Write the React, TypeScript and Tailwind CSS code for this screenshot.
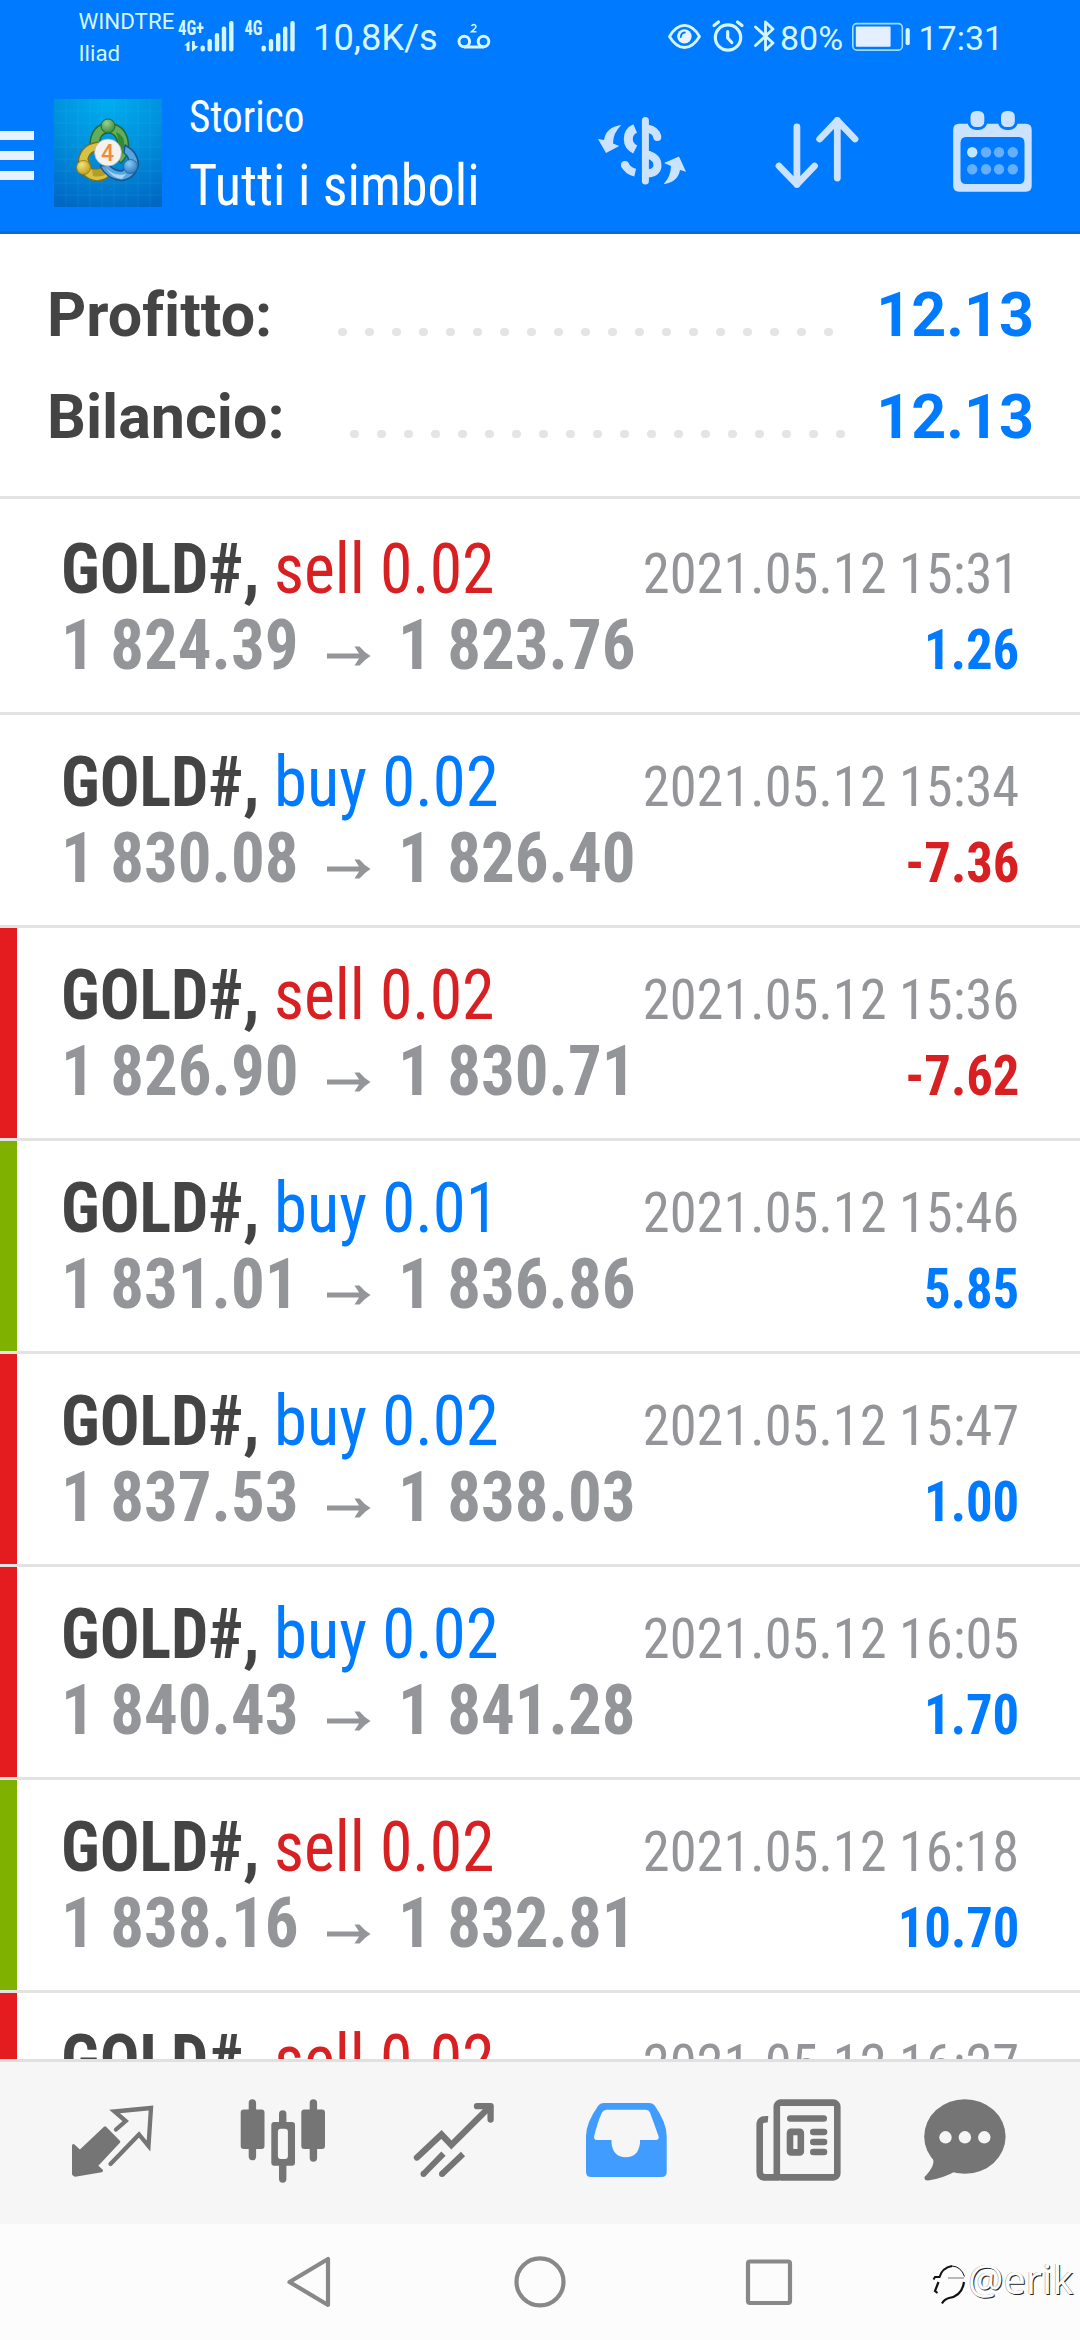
import type { ReactNode } from "react";

type Stripe = "none" | "red" | "green";
type Deal = {
  side: "sell" | "buy";
  volume: string;
  open: string;
  close: string;
  time: string;
  profit: string;
  stripe: Stripe;
};

const deals: Deal[] = [
  { side: "sell", volume: "0.02", open: "1 824.39", close: "1 823.76", time: "2021.05.12 15:31", profit: "1.26", stripe: "none" },
  { side: "buy", volume: "0.02", open: "1 830.08", close: "1 826.40", time: "2021.05.12 15:34", profit: "-7.36", stripe: "none" },
  { side: "sell", volume: "0.02", open: "1 826.90", close: "1 830.71", time: "2021.05.12 15:36", profit: "-7.62", stripe: "red" },
  { side: "buy", volume: "0.01", open: "1 831.01", close: "1 836.86", time: "2021.05.12 15:46", profit: "5.85", stripe: "green" },
  { side: "buy", volume: "0.02", open: "1 837.53", close: "1 838.03", time: "2021.05.12 15:47", profit: "1.00", stripe: "red" },
  { side: "buy", volume: "0.02", open: "1 840.43", close: "1 841.28", time: "2021.05.12 16:05", profit: "1.70", stripe: "red" },
  { side: "sell", volume: "0.02", open: "1 838.16", close: "1 832.81", time: "2021.05.12 16:18", profit: "10.70", stripe: "green" },
];

const stripeClass: Record<Stripe, string> = {
  none: "bg-white",
  red: "bg-[#e41c20]",
  green: "bg-[#7fb200]",
};

function Signal({ label, viewBox, className, bars, labelX, arrows }: {
  label: string; viewBox: string; className: string; bars: number[]; labelX: number; arrows?: boolean;
}) {
  const tops = [45.5, 39, 33, 26.5, 21];
  return (
    <svg viewBox={viewBox} className={className} fill="#d6f6ff">
      <text x={labelX} y="35" fontSize="19.5" fontWeight="700" fontFamily="Roboto Condensed" textLength={arrows ? 26 : 18} lengthAdjust="spacingAndGlyphs">
        {label}
      </text>
      {bars.map((x, i) => (
        <rect key={x} x={x - 2.2} y={tops[i]} width="4.4" height={51.5 - tops[i]} rx="2" />
      ))}
      {arrows && <path d="M184 45.5L189.5 41V51H186.600V45.500ZM192 41H194.800V45.500L198.500 46.500L192 51.500Z" />}
    </svg>
  );
}

function StatusBar() {
  return (
    <div className="flex h-[75px] items-center font-['Roboto',sans-serif] text-[#d6f6ff]">
      <div className="mb-[2px] ml-[78.5px] w-[98.5px] whitespace-nowrap text-[22.300px] leading-[32px]">
        <div>WINDTRE</div>
        <div>Iliad</div>
      </div>
      <Signal label="4G+" labelX={178} arrows viewBox="177 0 59 75" className="h-[75px] w-[59px]" bars={[202.7, 209.7, 217, 224, 231.300]} />
      <Signal label="4G" labelX={244.500} viewBox="236 0 64 75" className="h-[75px] w-[64px]" bars={[263.7, 271, 278.200, 285.200, 292.5]} />
      <div className="ml-[13px] w-[138px] whitespace-nowrap text-[36.300px] leading-[36px]">10,8K/s</div>
      <svg viewBox="451 0 47 75" className="h-[75px] w-[47px]" fill="none" stroke="#d6f6ff" strokeWidth="3">
        <circle cx="464.300" cy="41.500" r="5.300" />
        <circle cx="483.500" cy="41.500" r="5.300" />
        <path d="M464 47H484" />
        <path d="M471.500 26Q472.500 24.500 474 24.500Q476 24.800 476 26.500Q476 28 471.500 31.700H476.500" strokeWidth="1.5" />
      </svg>
      <svg viewBox="664 0 114 75" className="ml-[166px] h-[75px] w-[114px]" fill="none" stroke="#d6f6ff" strokeWidth="3.2" strokeLinecap="round" strokeLinejoin="round">
        <path d="M669.500 36.500Q676 25.300 684.500 25.300Q693 25.300 699.500 36.500Q693 47.500 684.500 47.500Q676 47.500 669.500 36.500Z" strokeWidth="2.800" />
        <circle cx="684.400" cy="36.400" r="7.200" fill="#e8f4ff" stroke="none" />
        <path d="M680.800 37Q681 32.800 684.800 32.500" stroke="#007aff" strokeWidth="1.800" />
        <circle cx="728" cy="37.500" r="12.700" />
        <path d="M727.700 31.500V38L731.800 42.500" />
        <path d="M714 25.500L718.500 22M742 25.500L737.500 22" />
        <path d="M755.500 27L773 43L765.500 50V22L773 29L755.500 45.500" strokeWidth="2.800" />
      </svg>
      <div className="ml-[2px] w-[72px] whitespace-nowrap text-[34px] leading-[34px]">80%</div>
      <svg viewBox="852 0 60 75" className="h-[75px] w-[60px]">
        <rect x="852.8" y="23.6" width="49.5" height="26.5" rx="4" fill="none" stroke="#9fdcff" strokeWidth="1.600" />
        <rect x="855.8" y="26.400" width="34.800" height="20.300" rx="1" fill="#e4f0ff" />
        <rect x="905.600" y="28" width="4.200" height="17.300" rx="2" fill="#d6f6ff" />
      </svg>
      <div className="ml-[6.500px] whitespace-nowrap text-[34px] leading-[34px]">17:31</div>
    </div>
  );
}

function AppLogo() {
  const grid = [12, 24, 36, 48, 60, 72, 84, 96];
  return (
    <svg viewBox="0 0 108 108" className="h-[108px] w-[108px]">
      <defs>
        <radialGradient id="sky" cx="0.5" cy="0" r="1.050">
          <stop offset="0" stopColor="#00aef0" />
          <stop offset="0.5" stopColor="#0090dc" />
          <stop offset="1" stopColor="#0068c4" />
        </radialGradient>
        <radialGradient id="leaf" cx="0.4" cy="0.3" r="0.8"><stop offset="0" stopColor="#9ad08a" /><stop offset="1" stopColor="#2c8234" /></radialGradient>
        <radialGradient id="sun" cx="0.35" cy="0.3" r="0.8"><stop offset="0" stopColor="#f4e27a" /><stop offset="1" stopColor="#b99a18" /></radialGradient>
        <radialGradient id="sea" cx="0.4" cy="0.3" r="0.8"><stop offset="0" stopColor="#8cc8f4" /><stop offset="1" stopColor="#1f74bc" /></radialGradient>
      </defs>
      <rect width="108" height="108" fill="url(#sky)" />
      {grid.map((p) => (
        <path key={p} d={`M${p} 0V108M0 ${p}H108`} stroke="#5cc4f4" strokeOpacity="0.12" strokeWidth="1" />
      ))}
      <g strokeLinejoin="round">
        <path d="M54 24Q74 26 74.500 47Q74 58 67 64L60 58L64 44Q62 34 54 34Q46 34 45 46L36 47Q36 26 54 24Z" fill="#64ad58" stroke="#206a36" strokeWidth="1.500" />
        <path d="M62 33Q72 37 70 48Q69 55 66 59L61 57Q67 44 62 33Z" fill="#2f8a3a" />
        <path d="M46 43Q28 44 24.500 60Q25 80 43 82Q54 81 59 73L52 66Q46 72 38 70L34 60Q36 52 45 51Z" fill="#d8c244" stroke="#77702a" strokeWidth="1.500" />
        <path d="M38 70Q46 72 50 67L55 73Q48 79 39 77Z" fill="#b59c22" />
        <path d="M71 46Q84 53 84.500 66Q81 80 67 81.500Q53 80 46 67L55 66Q60 72 68 72L75 66Q76 58 70 54Z" fill="#58a6e0" stroke="#17568f" strokeWidth="1.500" />
        <path d="M52 69Q60 78 72 75L68 80Q58 79 52 69Z" fill="#a8d6f6" />
      </g>
      <circle cx="54" cy="27" r="7" fill="url(#leaf)" stroke="#206a30" strokeWidth="1" />
      <circle cx="29.500" cy="68.500" r="7" fill="url(#sun)" stroke="#857414" strokeWidth="0.8" />
      <circle cx="76.500" cy="67.500" r="7" fill="url(#sea)" stroke="#1c5f9c" strokeWidth="0.8" />
      <circle cx="54" cy="53.500" r="13.500" fill="#f5f1ee" stroke="#a8b0a8" strokeWidth="0.8" />
      <text x="53.500" y="62" textAnchor="middle" fontFamily="Roboto" fontSize="23" fontWeight="500" fill="#f08a3c">4</text>
    </svg>
  );
}

function TitleBar() {
  return (
    <div className="flex h-[156px] items-center">
      <div className="mt-[4px] flex w-[34px] flex-col gap-[11px]">
        <div className="h-[9px] bg-[#e8f2ff]" />
        <div className="h-[9px] bg-[#e8f2ff]" />
        <div className="h-[9px] bg-[#e8f2ff]" />
      </div>
      <div className="ml-[20px]">
        <AppLogo />
      </div>
      <div className="ml-[27px] h-[132px] w-[407px] whitespace-nowrap font-['Roboto_Condensed','Roboto',sans-serif] font-[450] text-white">
        <div className="h-[61px] origin-left scale-x-[.935] text-[44px] leading-[60px]">Storico</div>
        <div className="origin-left scale-x-[.935] text-[58px] leading-[74px]">Tutti i simboli</div>
      </div>
      <svg viewBox="596 75 92 156" className="h-[156px] w-[92px]" fill="none" stroke="#cbe3ff" strokeWidth="8.5">
        <path d="M645.400 120.500V181" strokeWidth="7" strokeLinecap="round" />
        <path d="M635.200 128.500Q628.300 131.500 628.300 139Q628.300 146 635.200 149.500" strokeWidth="9" />
        <path d="M625 165Q628 171 635.200 172.700" strokeWidth="8" />
        <circle cx="625" cy="165" r="4" fill="#cbe3ff" stroke="none" />
        <path d="M647 128.500Q656 130 657.300 137" strokeWidth="8" />
        <circle cx="657.300" cy="137" r="4" fill="#cbe3ff" stroke="none" />
        <path d="M646 154Q657.500 157 657.500 165Q657.500 173 647 173.500" strokeWidth="8" />
        <path d="M621.300 125Q606 127 604 140L598 139L606 153L619.300 146L613 143.500Q613 133 621.300 125Z" fill="#cbe3ff" stroke="none" />
        <path d="M663.500 184.300Q678 182 680 170L686 171.700L679 156.500L664 163L671 166Q671 176 663.500 184.300Z" fill="#cbe3ff" stroke="none" />
      </svg>
      <svg viewBox="772 75 90 156" className="ml-[84px] h-[156px] w-[90px]" fill="none" stroke="#cbe3ff" strokeWidth="6.800" strokeLinecap="round" strokeLinejoin="round">
        <path d="M796.900 127V184.500M779 166L796.900 184.500L814.500 166" />
        <path d="M837.300 178V120.500M819.700 139L837.300 120.500L855 139" />
      </svg>
      <svg viewBox="950 75 84 156" className="ml-[88px] h-[156px] w-[84px]" fill="#cbe3ff">
        <path fillRule="evenodd" d="M959 123.700H1026Q1031.700 123.700 1031.700 130V186Q1031.700 191.700 1026 191.700H959Q953.200 191.700 953.200 186V130Q953.200 123.700 959 123.700ZM966 137Q960.500 137 960.500 143V178Q960.500 184 966 184H1019Q1024.500 184 1024.500 178V143Q1024.500 137 1019 137Z" />
        <rect x="969" y="109.500" width="16.800" height="19" rx="7" stroke="#007aff" strokeWidth="3" />
        <rect x="999.500" y="109.500" width="16.800" height="19" rx="7" stroke="#007aff" strokeWidth="3" />
        {[972.200, 986, 999, 1012.800].map((x, i) => (
          <g key={x}>
            <circle cx={x} cy="152.300" r="5.200" fill={i === 0 ? "#c2e6ff" : "#66afff"} />
            <circle cx={x} cy="169.300" r="5.200" fill="#66afff" />
          </g>
        ))}
      </svg>
    </div>
  );
}

function SummaryLine({ label, value, labelClass }: { label: string; value: string; labelClass: string }) {
  return (
    <div className="flex h-[102px] items-center justify-between font-['Roboto',sans-serif] text-[61px] font-bold leading-[102px] [font-variant-ligatures:none]">
      <div className="flex items-center">
        <div className={labelClass}>{label}</div>
        <div className="mt-[34px] flex gap-[18.500px]">
          {Array.from({ length: 19 }, (_, i) => (
            <div key={i} className="h-[8.500px] w-[8.500px] rounded-full bg-[#e4e4e4]" />
          ))}
        </div>
      </div>
      <div className="text-[#007aff]">{value}</div>
    </div>
  );
}

function Side({ side, volume }: { side: "sell" | "buy"; volume: string }) {
  return side === "sell" ? (
    <div className="origin-left scale-x-[.938] font-[440] text-[#d82022]">sell {volume}</div>
  ) : (
    <div className="origin-left scale-x-[.953] font-[440] text-[#007aff]">buy {volume}</div>
  );
}

function DealRow({ deal }: { deal: Deal }) {
  return (
    <div className="flex h-[213px] border-b-[3px] border-[#e3e3e3]">
      <div className={`w-[17px] shrink-0 ${stripeClass[deal.stripe]}`} />
      <div className="flex-1 whitespace-nowrap pl-[43.5px] pr-[61px] pt-[29px] font-['Roboto_Condensed','Roboto',sans-serif] text-[70px] leading-[76px]">
        <div className="flex h-[76px] items-baseline">
          <div className="w-[213px] shrink-0 font-bold text-[#444444]">
            <div className="origin-left scale-x-[.943]">GOLD#,</div>
          </div>
          <Side side={deal.side} volume={deal.volume} />
          <div className="ml-auto origin-right scale-x-[.972] text-[56px] text-[#949598]">{deal.time}</div>
        </div>
        <div className="flex h-[76px] items-baseline font-bold text-[#949599]">
          <div className="w-[266.5px] shrink-0">
            <div className="origin-left scale-x-[.955]">{deal.open}</div>
          </div>
          <svg viewBox="0 0 44 60" className="h-[60px] w-[44px] shrink-0" fill="#949599">
            <path transform="translate(0 28)" d="M0 16.500H32L27.500 9.500H32.500Q37 15 43.500 19Q37 23 32.500 28.500H27.500L32 21.500H0Z" />
          </svg>
          <div className="ml-[26.5px] origin-left scale-x-[.955]">{deal.close}</div>
          {deal.profit.startsWith("-") ? (
            <div className="ml-auto origin-right scale-x-[.94] text-[56px] text-[#d82022]">{deal.profit}</div>
          ) : (
            <div className="ml-auto origin-right scale-x-[.94] text-[56px] text-[#007aff]">{deal.profit}</div>
          )}
        </div>
      </div>
    </div>
  );
}

function Tab({ viewBox, children }: { viewBox: string; children: ReactNode }) {
  return (
    <svg viewBox={viewBox} className="h-[162px] w-[171px]" fill="#757575">
      {children}
    </svg>
  );
}

function TabBar() {
  return (
    <div className="flex h-[165px] shrink-0 border-t-[3px] border-[#e0e0e0] bg-[#f6f6f6] pl-[27px]">
      <Tab viewBox="27 2062 171 162">
        <path d="M73.500 2145.500L79.900 2151.500L105 2127.800L118.800 2141.800L96.300 2165.800L101.500 2170.700L75 2175.200L73.500 2174Z" stroke="#757575" strokeWidth="3" strokeLinejoin="round" />
        <path d="M116 2129.500L125.700 2121L114.500 2111.500L151 2108L148.500 2146L139 2134.500L110.500 2164" fill="none" stroke="#757575" strokeWidth="4.300" strokeLinecap="round" />
      </Tab>
      <Tab viewBox="198 2062 171 162">
        <rect x="248.700" y="2099.300" width="7.400" height="61" rx="3.700" />
        <rect x="240.700" y="2109.500" width="23.800" height="39.500" rx="3" />
        <rect x="279" y="2110.300" width="7.400" height="72.400" rx="3.700" />
        <rect x="271.300" y="2122" width="23.700" height="43.800" rx="3" />
        <rect x="277.900" y="2128.700" width="10" height="30.300" rx="3" fill="#f6f6f6" />
        <rect x="309.700" y="2099.300" width="7.400" height="62.500" rx="3.700" />
        <rect x="301.300" y="2109.500" width="23.700" height="39.500" rx="3" />
      </Tab>
      <Tab viewBox="369 2062 171 162">
        <g fill="none" stroke="#757575" strokeWidth="6.300" strokeLinecap="round">
          <path d="M417 2157.500L441.500 2134.500L451.400 2145L490 2106.500" strokeLinejoin="miter" />
          <path d="M477 2106.200H490.600V2119.500" strokeLinejoin="round" />
        </g>
        <g stroke="#757575" strokeWidth="6" fill="none">
          <path d="M423.500 2174L443.500 2153.700M442 2174L463 2154" />
        </g>
        <circle cx="423.500" cy="2174" r="3" />
        <circle cx="442" cy="2174" r="3" />
      </Tab>
      <Tab viewBox="540 2062 171 162">
        <path fill="#409cff" fillRule="evenodd" d="M604 2103H649Q653 2103 655 2106Q666.700 2123 666.700 2136V2172Q666.700 2177 661.500 2177H591Q586 2177 586 2172V2136Q586 2123 598 2106Q600 2103 604 2103ZM606.500 2109.700Q603.500 2109.700 602 2112.500Q597.500 2122 594.200 2136Q593.500 2140 597 2140H611.500V2143Q613 2157 625.700 2157.300Q638.500 2157 640 2143V2140H655.500Q659.500 2140 658.500 2136L650 2112.500Q648.800 2109.700 646 2109.700Z" />
      </Tab>
      <Tab viewBox="711 2062 171 162">
        <g fill="none" stroke="#757575" strokeWidth="6.600">
          <rect x="776.800" y="2102.600" width="60.500" height="74.800" rx="4" />
          <path d="M768 2119.300Q759.700 2118.500 759.700 2125V2172Q759.700 2177.400 765 2177.400H779" />
          <path d="M790.300 2118.500H823.700M813.300 2132H824M813.300 2142H824M813.300 2152H824" strokeLinecap="round" />
          <rect x="790" y="2131.900" width="10.800" height="20.500" rx="1" />
        </g>
      </Tab>
      <Tab viewBox="882 2062 171 162">
        <ellipse cx="964.900" cy="2136.500" rx="40.700" ry="37.300" />
        <path d="M932 2157Q937 2164 924.500 2177Q924 2180.500 928 2180.500Q943 2178.500 956 2171Z" />
        <circle cx="945.500" cy="2137.300" r="6.200" fill="#f6f6f6" />
        <circle cx="964.900" cy="2137.300" r="6.200" fill="#f6f6f6" />
        <circle cx="984.300" cy="2137.300" r="6.200" fill="#f6f6f6" />
      </Tab>
    </div>
  );
}

function SystemNav() {
  return (
    <div className="flex h-[116px] shrink-0 items-center bg-[#fcfcfc] pl-[193px]">
      <svg viewBox="193 2224 231 116" className="h-[116px] w-[231px]" fill="none" stroke="#888888" strokeWidth="4.200" strokeLinejoin="round">
        <path d="M289.500 2282L328 2259V2305Z" />
      </svg>
      <svg viewBox="424 2224 231 116" className="h-[116px] w-[231px]" fill="none" stroke="#888888" strokeWidth="4.200">
        <circle cx="540" cy="2281.800" r="23.500" />
      </svg>
      <svg viewBox="655 2224 231 116" className="h-[116px] w-[231px]" fill="none" stroke="#888888" strokeWidth="4.200">
        <rect x="748" y="2261.500" width="42" height="41.500" rx="2" />
      </svg>
      <svg viewBox="930 2224 38 116" className="ml-[44px] h-[116px] w-[38px]" fill="none" stroke="#111111">
        <path d="M933.500 2279.500L935 2277H939.500Q942 2268 952 2266" strokeWidth="2" />
        <path d="M952 2266Q961 2266.500 964.500 2276.500" strokeWidth="1" />
        <path d="M948 2278H964" strokeWidth="1" stroke="#777777" />
        <path d="M938.500 2282L935 2291L937.500 2293" strokeWidth="2.200" />
        <path d="M964 2282Q962 2296 949 2298Q944 2299.500 942 2303.500" strokeWidth="2.200" />
      </svg>
      <div className="mb-[6px] whitespace-nowrap font-['Noto_Sans',sans-serif] text-[39.5px] leading-[56px] text-[#fcfcfc] [text-shadow:1px_1px_0.5px_#222,-0.5px_-0.5px_0.5px_#999]">
        @erik
      </div>
    </div>
  );
}

export default function App() {
  return (
    <div className="flex h-[2340px] w-[1080px] flex-col overflow-hidden bg-white">
      <header className="h-[234px] shrink-0 border-b-[3px] border-[#0a6cc8] bg-[#007aff]">
        <StatusBar />
        <TitleBar />
      </header>
      <section className="shrink-0 border-b-[3px] border-[#e3e3e3] pb-[28px] pl-[47px] pr-[46px] pt-[30px] text-[#444444]">
        <SummaryLine label="Profitto:" value="12.13" labelClass="w-[291px]" />
        <SummaryLine label="Bilancio:" value="12.13" labelClass="w-[303px]" />
      </section>
      <main className="min-h-0 flex-1 overflow-hidden pt-[3px]">
        {deals.map((deal) => (
          <DealRow key={deal.time} deal={deal} />
        ))}
        <DealRow deal={{ side: "sell", volume: "0.02", open: "", close: "", time: "2021.05.12 16:27", profit: "", stripe: "red" }} />
      </main>
      <TabBar />
      <SystemNav />
    </div>
  );
}
